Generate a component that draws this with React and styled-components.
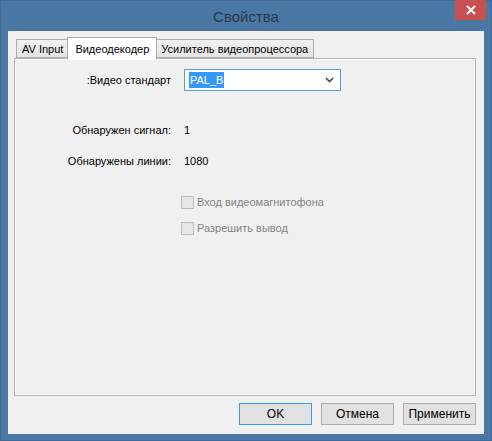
import React from "react";
import styled, { createGlobalStyle } from "styled-components";

const GlobalStyle = createGlobalStyle`
  html, body {
    margin: 0;
    padding: 0;
    background: #4a77a4;
  }
  body {
    font-family: "Liberation Sans", Arial, sans-serif;
    font-size: 11px;
    color: #000;
  }
`;

const Window = styled.div`
  width: 492px;
  height: 441px;
  box-sizing: border-box;
  background: #4a77a4;
  border: 1px solid #3f6a95;
  display: flex;
  flex-direction: column;
  padding: 0 7px 7px;
`;

const TitleBar = styled.div`
  position: relative;
  height: 30px;
  flex: none;
  display: flex;
  align-items: center;
  justify-content: center;
`;

const Title = styled.div`
  font-size: 15px;
  color: #2b3a4a;
  margin-top: 1px;
`;

const CloseButton = styled.div`
  position: absolute;
  top: -1px;
  right: -2px;
  width: 31px;
  height: 20px;
  background: #c75050;
  display: flex;
  align-items: center;
  justify-content: center;
`;

const Client = styled.div`
  flex: 1;
  background: #f0f0f0;
  display: flex;
  flex-direction: column;
  padding: 6px 8px 9px 6px;
`;

const TabStrip = styled.div`
  display: flex;
  align-items: flex-end;
  height: 21px;
  padding-left: 2px;
  position: relative;
  z-index: 1;
`;

const Tab = styled.div`
  box-sizing: border-box;
  height: ${(p) => (p.$active ? "22px" : "19px")};
  padding: 0 ${(p) => (p.$active ? "7px" : "5px")};
  margin: 0 ${(p) => (p.$active ? "-2px" : "0")};
  margin-bottom: ${(p) => (p.$active ? "-1px" : "0")};
  display: flex;
  align-items: center;
  padding-top: ${(p) => (p.$active ? "0" : "1px")};
  border: 1px solid #acacac;
  border-bottom: ${(p) => (p.$active ? "none" : "1px solid #acacac")};
  background: ${(p) => (p.$active ? "#ffffff" : "linear-gradient(#f0f0f0, #e5e5e5)")};
  position: relative;
  z-index: ${(p) => (p.$active ? 2 : 1)};
  white-space: nowrap;
`;

const Panel = styled.div`
  box-sizing: border-box;
  height: 338px;
  border: 1px solid #b4b4b4;
  box-shadow: inset -1px -1px 0 #ffffff, inset 1px 1px 0 #ffffff;
  background: #f0f0f0;
  padding: 10px 0 0 0;
  display: flex;
  flex-direction: column;
`;

const FieldGrid = styled.div`
  display: grid;
  grid-template-columns: 156px 1fr;
  column-gap: 13px;
  align-items: center;
`;

const Label = styled.div`
  text-align: right;
  white-space: nowrap;
  margin-top: ${(p) => p.$top || 0}px;
  line-height: 16px;
`;

const Value = styled.div`
  margin-top: ${(p) => p.$top || 0}px;
  line-height: 16px;
`;

const Combo = styled.div`
  box-sizing: border-box;
  width: 157px;
  height: 22px;
  border: 1px solid #569de5;
  background: #fff;
  display: flex;
  align-items: center;
  justify-content: space-between;
  padding: 0 6px 0 4px;
`;

const Selected = styled.span`
  background: #3399ff;
  color: #fff;
  padding: 0 1px;
  line-height: 16px;
`;

const CheckList = styled.div`
  display: flex;
  flex-direction: column;
  gap: 13px;
  margin: 27px 0 0 166px;
`;

const CheckRow = styled.label`
  display: flex;
  align-items: center;
  gap: 3px;
  color: #838383;
  line-height: 13px;
`;

const Box = styled.span`
  box-sizing: border-box;
  width: 13px;
  height: 13px;
  border: 1px solid #bcbcbc;
  background: #e6e6e6;
`;

const ButtonRow = styled.div`
  display: flex;
  justify-content: flex-end;
  gap: 9px;
  margin-top: 7px;
`;

const Button = styled.div`
  box-sizing: border-box;
  width: 73px;
  height: 22px;
  border: 1px solid ${(p) => (p.$default ? "#3399ff" : "#adadad")};
  background: #e1e1e1;
  display: flex;
  align-items: center;
  justify-content: center;
  font-size: 12px;
`;

export default function App() {
  return (
    <>
      <GlobalStyle />
      <Window>
        <TitleBar>
          <Title>Свойства</Title>
          <CloseButton>
            <svg width="10" height="10" viewBox="0 0 10 10">
              <path d="M1 1 L9 9 M9 1 L1 9" stroke="#fff" strokeWidth="2" />
            </svg>
          </CloseButton>
        </TitleBar>
        <Client>
          <TabStrip>
            <Tab>AV Input</Tab>
            <Tab $active>Видеодекодер</Tab>
            <Tab>Усилитель видеопроцессора</Tab>
          </TabStrip>
          <Panel>
            <FieldGrid>
              <Label>:Видео стандарт</Label>
              <Combo>
                <Selected>PAL_B</Selected>
                <svg width="9" height="6" viewBox="0 0 9 6">
                  <path d="M1 1 L4.5 4.5 L8 1" stroke="#444" strokeWidth="1.6" fill="none" />
                </svg>
              </Combo>
              <Label $top={31}>Обнаружен сигнал:</Label>
              <Value $top={31}>1</Value>
              <Label $top={15}>Обнаружены линии:</Label>
              <Value $top={15}>1080</Value>
            </FieldGrid>
            <CheckList>
              <CheckRow>
                <Box />
                Вход видеомагнитофона
              </CheckRow>
              <CheckRow>
                <Box />
                Разрешить вывод
              </CheckRow>
            </CheckList>
          </Panel>
          <ButtonRow>
            <Button $default>OK</Button>
            <Button>Отмена</Button>
            <Button>Применить</Button>
          </ButtonRow>
        </Client>
      </Window>
    </>
  );
}
